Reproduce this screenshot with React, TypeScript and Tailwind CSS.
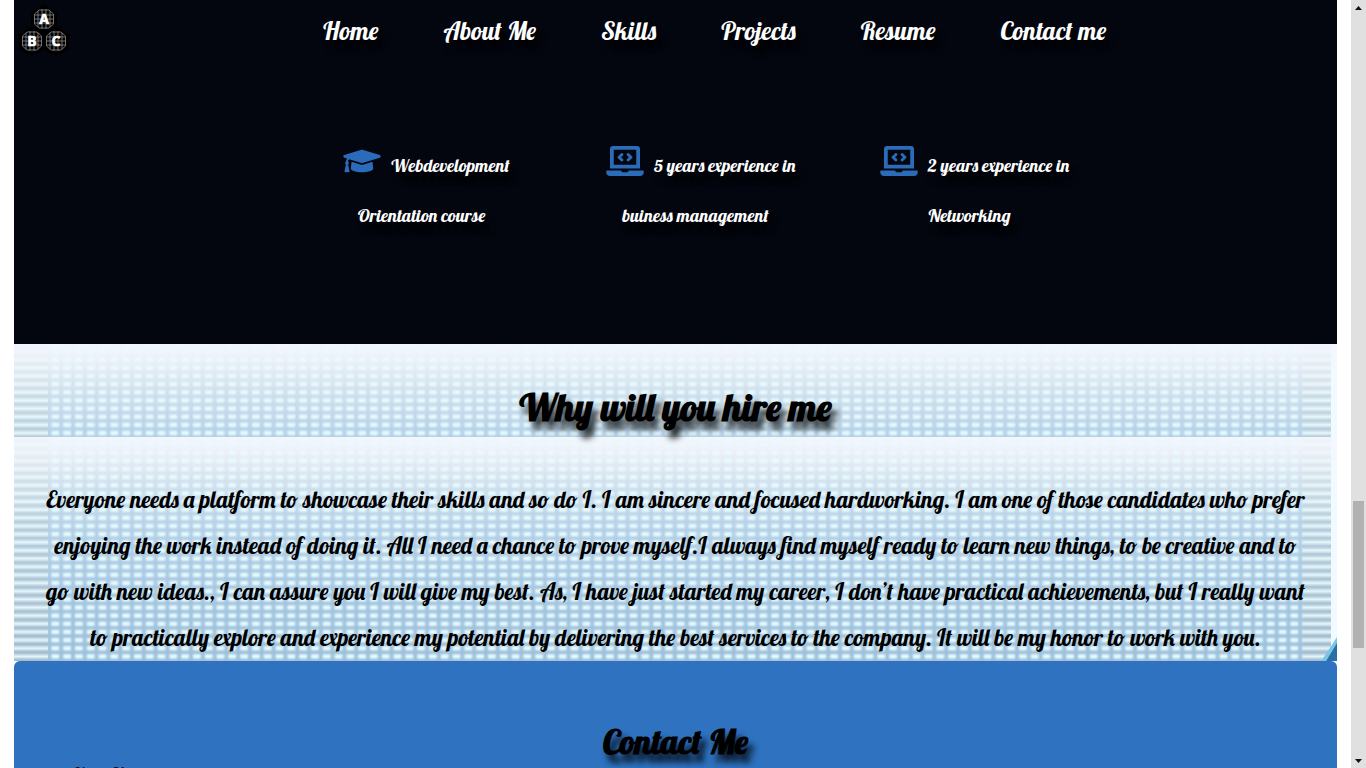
import { FaGraduationCap, FaLaptopCode } from "react-icons/fa";
import type { IconType } from "react-icons";

const links = ["Home", "About Me", "Skills", "Projects", "Resume", "Contact me"];

const facts: { icon: IconType; first: string; second: string }[] = [
  { icon: FaGraduationCap, first: "Webdevelopment", second: "Orientation course" },
  { icon: FaLaptopCode, first: "5 years experience in", second: "buiness management" },
  { icon: FaLaptopCode, first: "2 years experience in", second: "Networking" },
];

const pitch = `Everyone needs a platform to showcase their skills and so do I. I am sincere and focused hardworking. I am one of those candidates who prefer enjoying the work instead of doing it. All I need a chance to prove myself.I always find myself ready to learn new things, to be creative and to go with new ideas., I can assure you I will give my best. As, I have just started my career, I don’t have practical achievements, but I really want to practically explore and experience my potential by delivering the best services to the company. It will be my honor to work with you.`;

function Globe({ x, y, letter }: { x: number; y: number; letter: string }) {
  return (
    <g transform={`translate(${x} ${y})`}>
      <path d="M0-15 13-7V8L0 15-13 8V-7Z" fill="#000" />
      <g fill="none" stroke="#8b8b8b" strokeWidth="0.8">
        <path d="M-5-9H5L9.5-5V5L5 9H-5L-9.5 5V-5Z" />
        <path d="M-9-4H9M-10 0H10M-9 4H9M-6-8V8M-2-10V10M2-10V10M6-8V8" />
      </g>
      <text
        y="5"
        textAnchor="middle"
        fill="#fff"
        stroke="#fff"
        strokeWidth="0.6"
        fontSize="14"
        fontWeight="700"
        fontFamily="Open Sans, sans-serif"
      >
        {letter}
      </text>
    </g>
  );
}

function Logo() {
  return (
    <svg width="56" height="56" viewBox="0 0 56 56" role="img" aria-label="ABC">
      <Globe x={28} y={19} letter="A" />
      <Globe x={16} y={41} letter="B" />
      <Globe x={40} y={41} letter="C" />
    </svg>
  );
}

function Weave() {
  return (
    <svg className="absolute inset-0 h-full w-full" aria-hidden="true">
      <defs>
        <linearGradient id="sky" x1="0" y1="0" x2="0" y2="1">
          <stop offset="0" stopColor="#f3f5fc" />
          <stop offset="0.12" stopColor="#dbe5ef" />
          <stop offset="0.38" stopColor="#b4cfe6" />
          <stop offset="0.7" stopColor="#a3c4df" />
          <stop offset="1" stopColor="#9bbdd8" />
        </linearGradient>
        <linearGradient id="edge" x1="0" y1="0" x2="0" y2="1">
          <stop offset="0" stopColor="#eff2f8" />
          <stop offset="0.12" stopColor="#dae2e9" />
          <stop offset="0.38" stopColor="#b5cddb" />
          <stop offset="1" stopColor="#9fb9cb" />
        </linearGradient>
        <linearGradient id="thread" x1="0" y1="0" x2="0" y2="1">
          <stop offset="0" stopColor="#eafaff" stopOpacity="0" />
          <stop offset="0.5" stopColor="#eafaff" stopOpacity="0.95" />
          <stop offset="1" stopColor="#eafaff" stopOpacity="0" />
        </linearGradient>
        <linearGradient id="haze" x1="0" y1="0" x2="0" y2="1">
          <stop offset="0" stopColor="#f5f6fd" stopOpacity="0.5" />
          <stop offset="0.2" stopColor="#f5f6fd" stopOpacity="0" />
        </linearGradient>
        <filter id="soft" x="-30%" y="-40%" width="160%" height="180%">
          <feGaussianBlur stdDeviation="0.9" />
        </filter>
        <pattern id="dots" x="1.4" y="3.4" width="11.8" height="8.15" patternUnits="userSpaceOnUse">
          <rect x="2" y="1.9" width="7.8" height="4.4" fill="#e6fbff" filter="url(#soft)" />
        </pattern>
        <pattern id="stripes" x="0" y="3.4" width="20" height="8.15" patternUnits="userSpaceOnUse">
          <rect y="0.6" width="20" height="7" fill="url(#thread)" />
        </pattern>
        <g id="tile">
          <rect width="100%" height="240" fill="url(#sky)" />
          <svg x="34" width="100%" height="240">
            <rect width="100%" height="240" fill="url(#dots)" />
          </svg>
          <rect width="34" height="240" fill="url(#edge)" />
          <rect width="34" height="240" fill="url(#stripes)" />
          <svg x="100%" overflow="visible">
            <rect x="-34" width="34" height="240" fill="url(#edge)" />
            <rect x="-34" width="28" height="240" fill="url(#stripes)" />
            <rect x="-6" width="6" height="240" fill="#f1fbff" />
          </svg>
          <rect width="100%" height="240" fill="url(#haze)" />
        </g>
      </defs>
      <svg width="100%" height="93">
        <use href="#tile" />
      </svg>
      <svg y="93" width="100%" height="240">
        <use href="#tile" />
        <svg x="100%" overflow="visible">
          <path d="M-17 226 0 200V226Z" fill="#79c5e6" />
          <path d="M-12 226 0 206V226Z" fill="#2a6ea6" />
        </svg>
      </svg>
    </svg>
  );
}

function Scrollbar() {
  return (
    <div className="flex w-[15px] shrink-0 flex-col items-center bg-[#e0e0e0]" aria-hidden="true">
      <svg width="15" height="15" viewBox="0 0 15 15">
        <path d="M4 10 7.5 6 11 10Z" fill="#111" />
      </svg>
      <div className="grow-[486]" />
      <div className="w-[11px] grow-[147] bg-[#b1b1b1]" />
      <div className="grow-[105]" />
      <svg width="15" height="15" viewBox="0 0 15 15">
        <path d="M4 6 7.5 10 11 6Z" fill="#111" />
      </svg>
    </div>
  );
}

export default function App() {
  return (
    <div className="flex h-screen overflow-hidden bg-white font-['Lobster','Liberation_Serif',serif]">
      <div className="mx-[14px] min-w-0 flex-1">
        <header className="flex h-16 bg-[#03060e] pl-0.5 text-white">
          <a href="#home" className="shrink-0">
            <Logo />
          </a>
          <nav className="flex flex-1 items-center justify-center gap-[65px] pb-0.5 pl-5 text-[25px] whitespace-nowrap text-shadow-[5px_8px_6px_#000000cc]">
            {links.map((link) => (
              <a key={link} href="#section">
                {link}
              </a>
            ))}
          </nav>
        </header>

        <section className="flex justify-center bg-[#03060e] pt-[77px] pb-[103px] pl-[50px] text-white">
          {facts.map(({ icon: Icon, first, second }) => (
            <div
              key={first}
              className="w-[274px] text-center text-[18px] leading-[50px] whitespace-nowrap text-shadow-[5px_8px_6px_#000000cc]"
            >
              <p className="flex items-center justify-center gap-2.5">
                <Icon className="mb-2.5 h-[30px] w-[38px] text-[#2a6cb9]" />
                {first}
              </p>
              <p className="pr-2.5">{second}</p>
            </div>
          ))}
        </section>

        <section className="relative text-center text-black">
          <Weave />
          <div className="relative px-[30px] pt-[35px]">
            <h1 className="text-[38px] leading-[56px] font-bold text-shadow-[5px_8px_6px_#000000cc]">
              Why will you hire me
            </h1>
            <p className="pt-[42px] text-[23px] leading-[46px]">{pitch}</p>
          </div>
        </section>

        <section className="rounded-t-md bg-[#2e72c0] px-[58px] pt-[59px] pb-20 text-black">
          <h2 className="text-center text-[34px] leading-[44px] font-bold text-shadow-[5px_8px_6px_#000000cc]">
            Contact Me
          </h2>
          <form className="pt-0.5">
            <label htmlFor="name" className="block text-[18px] leading-[16px]">
              Your Name
            </label>
            <input id="name" className="h-10 w-full bg-white" />
          </form>
        </section>
      </div>
      <Scrollbar />
    </div>
  );
}
